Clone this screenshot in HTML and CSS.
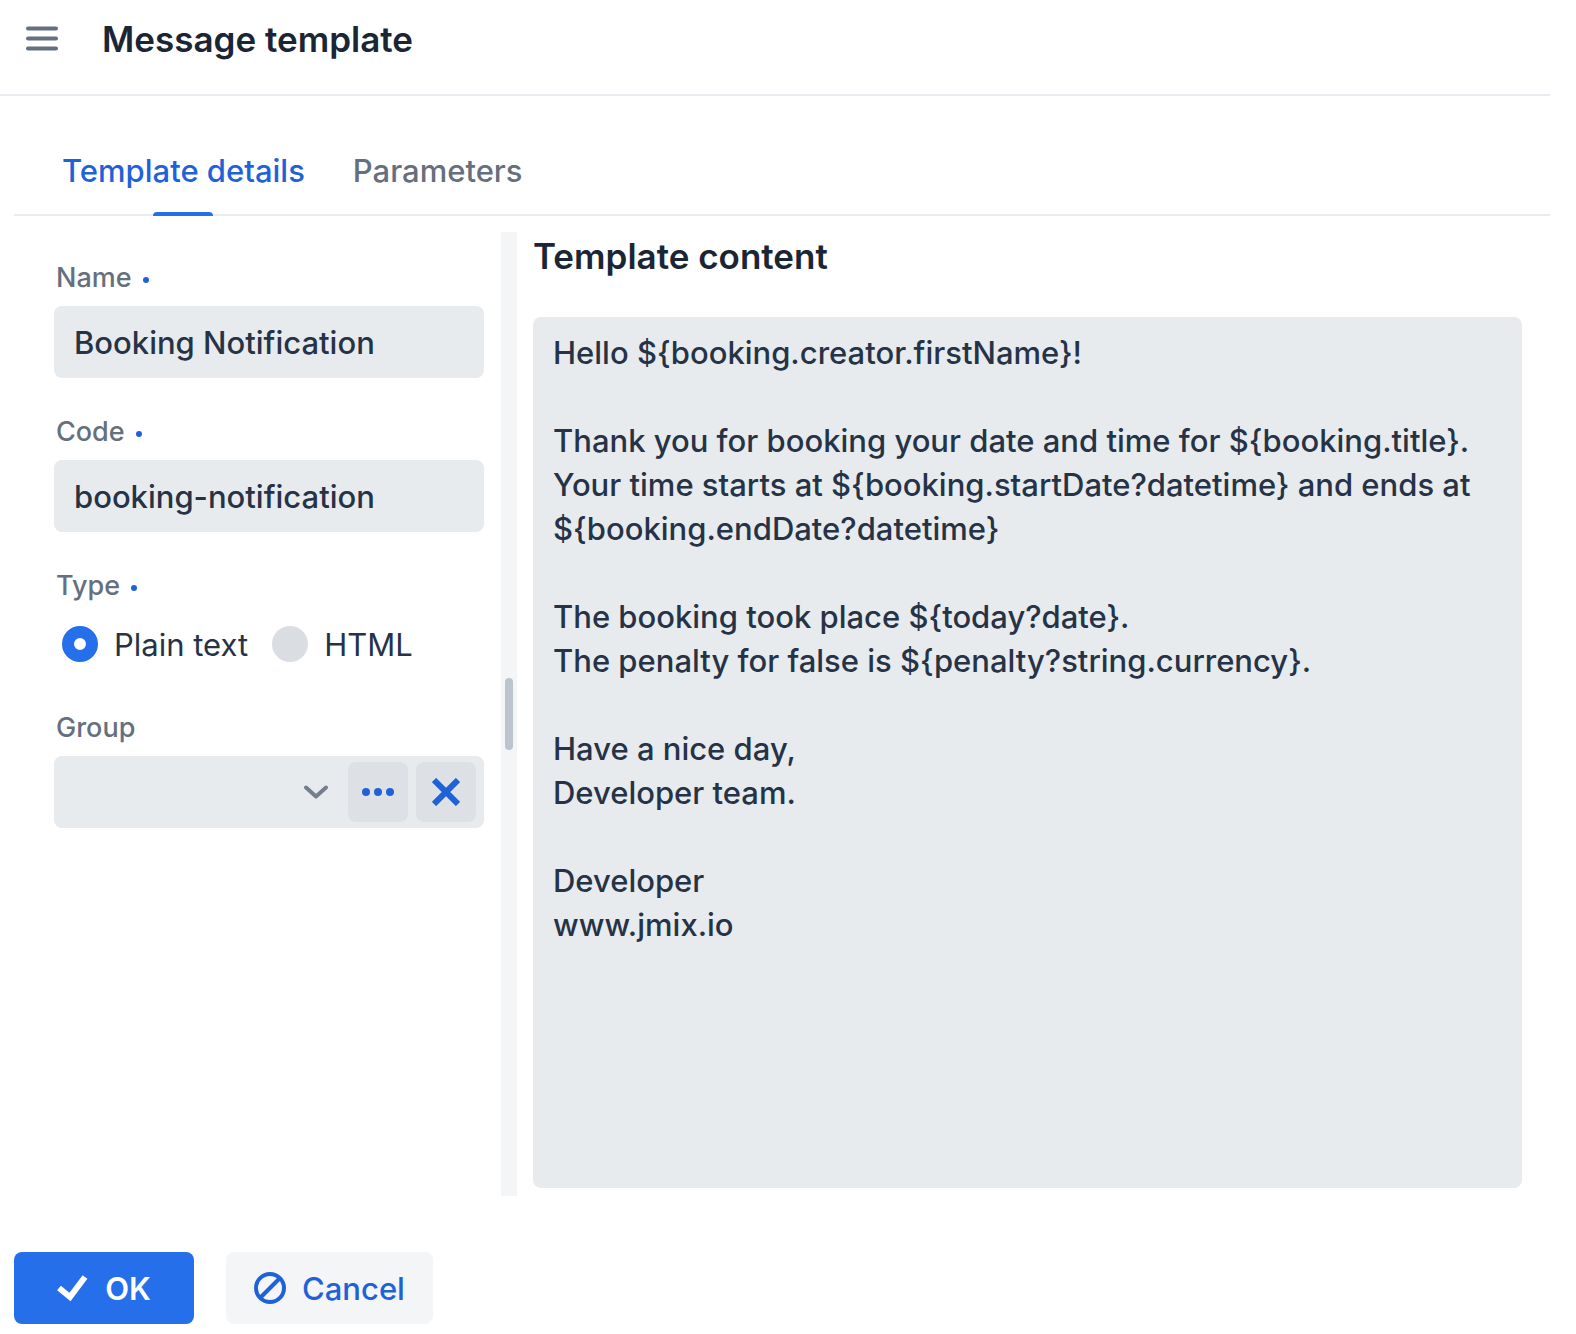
FILE: index.html
```html
<!DOCTYPE html>
<html lang="en">
<head>
<meta charset="utf-8">
<meta name="viewport" content="width=device-width, initial-scale=1">
<title>Message template</title>
<link rel="stylesheet" href="styles.css">
</head>
<body>
<div class="app">
  <header class="header">
    <button class="menu-toggle" type="button" aria-label="Toggle menu">
      <svg width="32" height="26" viewBox="0 0 32 26" fill="none" stroke="currentColor" stroke-width="4" stroke-linecap="round"><path d="M2 2.5h28M2 12.5h28M2 22.5h28"/></svg>
    </button>
    <h1 class="title">Message template</h1>
  </header>

  <main class="view">
    <div class="tabs" role="tablist">
      <button class="tab tab-selected" type="button" role="tab" aria-selected="true">Template details</button>
      <button class="tab" type="button" role="tab" aria-selected="false">Parameters</button>
    </div>

    <div class="split">
      <form class="form">
        <div class="field">
          <label class="label required" for="name">Name</label>
          <input class="input" id="name" type="text" value="Booking Notification">
        </div>
        <div class="field">
          <label class="label required" for="code">Code</label>
          <input class="input" id="code" type="text" value="booking-notification">
        </div>
        <div class="field" role="radiogroup" aria-labelledby="type-label">
          <span class="label required" id="type-label">Type</span>
          <div class="radios">
            <label class="radio-label"><input class="radio" type="radio" name="type" checked>Plain text</label>
            <label class="radio-label"><input class="radio" type="radio" name="type">HTML</label>
          </div>
        </div>
        <div class="field">
          <label class="label" for="group">Group</label>
          <div class="picker">
            <input class="picker-input" id="group" type="text" role="combobox" aria-expanded="false">
            <button class="chevron" type="button" aria-label="Open list">
              <svg width="24" height="14" viewBox="0 0 24 14" fill="none" stroke="currentColor" stroke-width="4" stroke-linecap="round" stroke-linejoin="round"><path d="M2 2.5l10 9 10-9"/></svg>
            </button>
            <button class="picker-action" type="button" aria-label="Select">
              <svg width="32" height="8" viewBox="0 0 32 8" fill="currentColor"><circle cx="4" cy="4" r="4"/><circle cx="16" cy="4" r="4"/><circle cx="28" cy="4" r="4"/></svg>
            </button>
            <button class="picker-action" type="button" aria-label="Clear">
              <svg width="28" height="28" viewBox="0 0 28 28" fill="none" stroke="currentColor" stroke-width="6"><path d="M2 2l24 24M26 2L2 26"/></svg>
            </button>
          </div>
        </div>
      </form>

      <div class="splitter" role="separator"><span class="splitter-handle"></span></div>

      <section class="content">
        <h2 class="content-title" id="content-title">Template content</h2>
        <textarea class="textarea" aria-labelledby="content-title" spellcheck="false">Hello ${booking.creator.firstName}!

Thank you for booking your date and time for ${booking.title}.
Your time starts at ${booking.startDate?datetime} and ends at ${booking.endDate?datetime}

The booking took place ${today?date}.
The penalty for false is ${penalty?string.currency}.

Have a nice day,
Developer team.

Developer
www.jmix.io</textarea>
      </section>
    </div>

    <footer class="actions">
      <button class="button button-primary" type="button">
        <svg width="32" height="28" viewBox="0 0 32 28" fill="none" stroke="currentColor" stroke-width="6"><path d="M2 14l11 9L28 3"/></svg>
        OK
      </button>
      <button class="button" type="button">
        <svg width="32" height="32" viewBox="0 0 32 32" fill="none" stroke="currentColor" stroke-width="4"><circle cx="16" cy="16" r="14"/><path d="M6.500 25.500l19-19"/></svg>
        Cancel
      </button>
    </footer>
  </main>
</div>
</body>
</html>
```
FILE: styles.css
```css
:root {
  --primary: #256feb;
  --primary-text: #1f62d8;
  --field: #e7ebee;
  --line: #e8ebef;
  --subtle: #f3f5f7;
  --heading: #1b2634;
  --body: #263346;
  --secondary: #656f7e;
}

* {
  box-sizing: border-box;
}

body {
  margin: 0;
  background: #fff;
  color: var(--body);
  font-family: Inter, "Liberation Sans", sans-serif;
  font-size: 31px;
}

button,
input,
textarea {
  border: 0;
  padding: 0;
  margin: 0;
  background: none;
  color: inherit;
  font: inherit;
}

h1,
h2 {
  margin: 0;
  color: var(--heading);
  font-size: 35px;
  font-weight: 600;
  line-height: 44px;
}

svg {
  display: block;
  flex: none;
}

.app {
  display: flex;
  flex-direction: column;
  min-height: 100vh;
  padding-right: 26px;
}

.header {
  display: flex;
  align-items: center;
  gap: 44px;
  padding: 0 26px 16px;
  height: 96px;
  border-bottom: 2px solid var(--line);
}

.menu-toggle {
  color: var(--secondary);
}

.view {
  display: flex;
  flex: 1;
  flex-direction: column;
  padding: 32px 0 10px 14px;
}

.tabs {
  display: flex;
  padding: 0 24px;
  border-bottom: 2px solid var(--line);
}

.tab {
  position: relative;
  height: 86px;
  padding: 0 24px 2px;
  color: var(--secondary);
  font-weight: 500;
}

.tab-selected {
  color: var(--primary-text);
}

.tab-selected::after {
  content: "";
  position: absolute;
  bottom: -2px;
  left: calc(50% - 30px);
  width: 60px;
  height: 4px;
  border-radius: 4px 4px 0 0;
  background: var(--primary);
}

.split {
  display: grid;
  flex: 1;
  grid-template-columns: 487fr 16px 1033fr;
  margin: 16px 0 56px;
}

.form {
  display: flex;
  flex-direction: column;
  gap: 36px;
  min-width: 0;
  padding: 28px 17px 0 40px;
}

.field {
  display: flex;
  flex-direction: column;
  gap: 10px;
}

.label {
  display: flex;
  align-items: center;
  gap: 11px;
  padding-left: 2px;
  color: var(--secondary);
  font-size: 27px;
  font-weight: 500;
  line-height: 36px;
}

.required::after {
  content: "";
  width: 6px;
  height: 6px;
  margin-top: 4px;
  border-radius: 50%;
  background: var(--primary-text);
}

.input {
  width: 100%;
  height: 72px;
  padding: 0 20px;
  border-radius: 8px;
  background: var(--field);
  font-weight: 500;
}

.radios {
  display: flex;
  gap: 24px;
  height: 60px;
  padding-left: 8px;
}

.radio-label {
  display: flex;
  align-items: center;
  gap: 16px;
}

.radio {
  width: 36px;
  height: 36px;
  border-radius: 50%;
  appearance: none;
  background: #dadee3;
}

.radio:checked {
  border: 12px solid var(--primary);
  background: #fff;
}

.picker {
  display: flex;
  align-items: center;
  gap: 8px;
  height: 72px;
  padding-right: 8px;
  border-radius: 8px;
  background: var(--field);
}

.picker-input {
  flex: 1;
  min-width: 0;
  height: 100%;
  padding: 0 20px;
}

.chevron {
  padding: 12px;
  color: #747e8c;
}

.picker-action {
  display: flex;
  align-items: center;
  justify-content: center;
  width: 60px;
  height: 60px;
  border-radius: 8px;
  background: #dde1e6;
  color: var(--primary-text);
}

.splitter {
  display: flex;
  align-items: center;
  justify-content: center;
  background: var(--subtle);
}

.splitter-handle {
  width: 8px;
  height: 72px;
  border-radius: 4px;
  background: #bcc4cd;
}

.content {
  display: flex;
  flex-direction: column;
  gap: 39px;
  min-width: 0;
  padding: 2px 28px 8px 16px;
}

.textarea {
  flex: 1;
  width: 100%;
  padding: 14px 20px;
  border-radius: 8px;
  background: var(--field);
  font-weight: 500;
  line-height: 44px;
  resize: none;
}

.actions {
  display: flex;
  gap: 32px;
}

.button {
  display: flex;
  align-items: center;
  justify-content: center;
  gap: 16px;
  height: 72px;
  padding: 0 28px;
  border-radius: 8px;
  background: var(--subtle);
  color: var(--primary-text);
  font-weight: 500;
}

.button-primary {
  min-width: 180px;
  background: var(--primary);
  color: #fff;
  font-weight: 600;
}
```
